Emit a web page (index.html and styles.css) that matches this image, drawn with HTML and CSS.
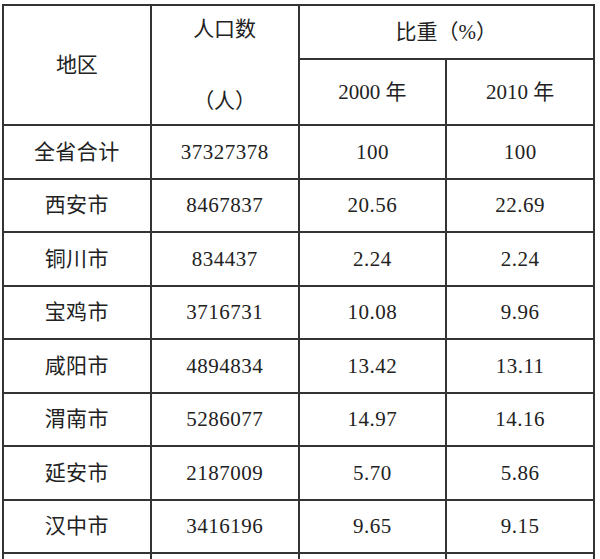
FILE: index.html
```html
<!DOCTYPE html>
<html lang="zh-CN">
<head>
<meta charset="utf-8">
<link rel="stylesheet" href="styles.css">
</head>
<body>
<table class="pop">
  <colgroup><col class="c"><col class="c"><col class="c"><col class="c"></colgroup>
  <thead>
    <tr class="h1">
      <th rowspan="2">地区</th>
      <th rowspan="2" class="two"><div class="l1">人口数</div><div class="l2">（人）</div></th>
      <th colspan="2">比重（%）</th>
    </tr>
    <tr class="h2">
      <th>2000 年</th>
      <th>2010 年</th>
    </tr>
  </thead>
  <tbody>
    <tr><td>全省合计</td><td>37327378</td><td>100</td><td>100</td></tr>
    <tr><td>西安市</td><td>8467837</td><td>20.56</td><td>22.69</td></tr>
    <tr><td>铜川市</td><td>834437</td><td>2.24</td><td>2.24</td></tr>
    <tr><td>宝鸡市</td><td>3716731</td><td>10.08</td><td>9.96</td></tr>
    <tr><td>咸阳市</td><td>4894834</td><td>13.42</td><td>13.11</td></tr>
    <tr><td>渭南市</td><td>5286077</td><td>14.97</td><td>14.16</td></tr>
    <tr><td>延安市</td><td>2187009</td><td>5.70</td><td>5.86</td></tr>
    <tr><td>汉中市</td><td>3416196</td><td>9.65</td><td>9.15</td></tr>
    <tr><td></td><td></td><td></td><td></td></tr>
  </tbody>
</table>
</body>
</html>
```
FILE: styles.css
```css
html, body {
  margin: 0;
  padding: 0;
  overflow: hidden;
  background: #fff;
}
body {
  width: 600px;
  height: 559px;
}
.pop {
  margin: 4px 0 0 2px;
  width: 593px;
  table-layout: fixed;
  border-collapse: collapse;
  font-family: "Liberation Serif", "Noto Sans CJK SC", serif;
  font-size: 21px;
  color: #222;
}
.c { width: 25%; }
.pop th, .pop td {
  border: 2px solid #333;
  padding: 0;
  text-align: center;
  vertical-align: middle;
  font-weight: normal;
  line-height: 24px;
}
.pop th { font-family: "Liberation Serif", "Noto Sans CJK SC", serif; }
.h1 th { height: 52px; }
.h2 th { height: 64px; }
.two { vertical-align: middle; }
.l1 { margin-bottom: 48px; }
.pop tbody tr { height: 53.5px; }
.pop tbody td { letter-spacing: 0.5px; }
```
